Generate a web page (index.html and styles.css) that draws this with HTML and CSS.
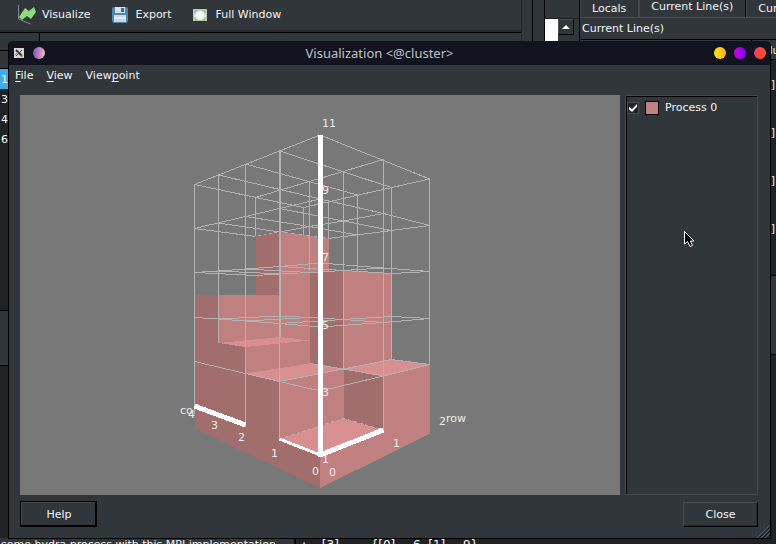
FILE: index.html
```html
<!DOCTYPE html>
<html lang="en">
<head>
<meta charset="utf-8">
<title>Visualization</title>
<link rel="stylesheet" href="styles.css">
</head>
<body>
<main class="desktop">
  <section class="left">
    <div class="toolbar">
      <button class="tool"><svg width="19" height="20" viewBox="0 0 19 20"><path d="M.5 0v14l12 5" fill="none" stroke="#8a8d8e"/><path d="M1 12 7 3l4 3 5-4 2 5-5 7-4-3-5 4z" fill="#8edb7d"/></svg>Visualize</button>
      <button class="tool"><svg width="16" height="16" viewBox="0 0 16 16"><rect width="16" height="16" rx="2" fill="#4d87aa"/><rect x="3" width="10" height="6" fill="#d8e2e8"/><rect x="9" y="1" width="3" height="4" fill="#356c92"/><rect x="2" y="8" width="12" height="7" fill="#c8d8e2"/><path d="M2 11h12" stroke="#e9eff3" stroke-width="2"/></svg>Export</button>
      <button class="tool"><svg width="14" height="12" viewBox="0 0 14 12"><rect width="14" height="12" fill="#bfcac0"/><rect x="1" y="2" width="12" height="9" fill="#dce7dc"/><circle cx="7" cy="6" r="4" fill="#f8faf8"/><path d="M2 5V2h3M9 2h3v3M2 8v3h3M9 11h3V8" fill="none" stroke="#86b768"/></svg>Full Window</button>
    </div>
    <div class="work">
      <ul class="ranks">
        <li class="tabstub"></li><li class="headstub"></li>
        <li class="on">1</li><li>3</li><li>4</li><li>6</li><li class="void"></li><li class="split"></li><li class="void grow"></li>
      </ul>
    </div>
    <p class="log">some hydra process with this MPI implementation</p>
  </section>
  <div class="gutter"></div>
  <section class="source">
    <div class="sourcehead"></div>
    <div class="scroll"><span class="page"></span><button class="up" aria-label="Scroll up"></button></div>
  </section>
  <section class="right">
    <nav class="tabs"><button>Locals</button><button class="active">Current Line(s)</button><button>Current Stack</button></nav>
    <h2>Current Line(s)</h2>
    <div class="vars">
      <div class="varhead"><span></span><span>Value</span></div>
      <div class="row">]</div><div class="row">]</div><div class="row">]</div><div class="row">]</div>
      <div class="rest"></div><div class="band"></div><div class="rest grow"></div>
    </div>
  </section>
  <p class="value">: &nbsp;-.[3] <span>{[0] = 6, [1] = 9}</span></p>
</main>

<section class="dialog" role="dialog" aria-label="Visualization">
  <header class="title">
    <svg width="10" height="10" viewBox="0 0 10 10"><rect width="10" height="10" fill="#d6d6d2"/><path d="m2 2 6 6" stroke="#333" stroke-width="2"/><path d="M8 2 2 8" stroke="#444"/><path d="m1 7 3-3M6 8h3" stroke="#e08040"/></svg>
    <i class="dot pin"></i>
    <h1>Visualization &lt;@cluster&gt;</h1>
    <button class="dot min" aria-label="Minimize"></button><button class="dot max" aria-label="Maximize"></button><button class="dot end" aria-label="Close window"></button>
  </header>
  <nav class="menu"><button><u>F</u>ile</button><button><u>V</u>iew</button><button>View<u>p</u>oint</button></nav>
  <div class="body">
    <div class="plot">
      <svg viewBox="20 95 600 400" role="img" aria-label="3D bar chart">
        <g class="grid">
          <path d="M320 135 194.500 184.500M383.500 159.500 255.500 197.500M429.500 179 303.500 207.500M320 135 429.500 179M279.500 151 391.500 187.500M245.500 164 357.500 195M218.500 175 328.500 201M194.500 184.500 303.500 207.500"/>
          <path d="M320 199 279.500 208.500 245.500 216.500 194.500 228.500M383.500 213.500 343.500 221 309.500 226.500 255.500 236.500M429.500 225.500 391.500 230.500 328.500 238.500M320 199 383.500 213.500 429.500 225.500M279.500 208.500 343.500 221 391.500 230.500M245.500 216.500 309.500 226.500 357.500 235M218.500 223 280 232 328.500 238.500M194.500 228.500 255.500 236.500"/>
          <path d="M303.500 207V236M357.500 195V271M328.500 201V239M255.500 197V237"/>
        </g>
        <g class="side">
          <path d="M255.500 236.500 280 232V300H255.500zM309.500 272 343.500 270.500V370L309.500 364zM194.500 295H218.500V343L245.500 347V373.500L279.500 381.500V439L320 455V488L194.500 428zM343.500 369 383.500 376V431L343.500 418.500z"/>
        </g>
        <g class="face">
          <path d="M280 232 328.500 238.500V271.500L309.500 272V364L280 340zM218.500 295H280V337L309.500 340.500V364L245.500 373.500V347L218.500 343zM343.500 270.500 391.500 273.500V360L343.500 369zM279.500 381.500 320 373.500 343.500 369V418.500L279.500 439zM383.500 376 429.500 364.500V434L320 488V455L383.500 431z"/>
        </g>
        <g class="top">
          <path d="M218.500 343 280 337 309.500 340.500 245.500 347zM245.500 373.500 309.500 363.500 343.500 369 279.500 381.500zM343.500 369 391.500 359.500 429.500 364.500 383.500 376zM320 455 279.500 439 343.500 418.500 383.500 430z"/>
        </g>
        <g class="grid">
          <path d="M194.500 184V414M218.500 175V343M245.500 164V427M383.500 159V431M343.500 171V369M309.500 181V271M391.500 187V360M429.500 179V365M279.500 381V439"/>
          <path class="double" d="M280 151V337"/><path d="M279.500 337V382"/>
          <path d="M320 263 279.500 266.500 245.500 269 218.500 271 194.500 272.500 255.500 275.500M383.500 268 343.500 270.500 309.500 272.500 280 274 255.500 275.500M320 263 383.500 268 429.500 271.500 391.500 273.500M279.500 266.500 343.500 270.500 391.500 273.500M245.500 269 309.500 272.500M218.500 271 280 274"/>
          <path d="M320 327 279.500 323.500 245.500 321 218.500 319 194.500 317.500M383.500 322.500 343.500 319.500 309.500 317.500 280 316 218.500 319M320 327 383.500 322.500 429.500 318.500 391.500 316.500 343.500 319.500 279.500 323.500M245.500 321 309.500 317.500"/>
          <path d="M194.500 361.500 245.500 373.500 279.500 381.500 320 391 383.500 376 429.500 364.500 391.500 359.500 343.500 369 383.500 376M343.500 369 279.500 381.500M309.500 363.500 343.500 369"/>
          <path d="M279.500 439 343.500 418.500 383.500 430" stroke-dasharray="3 3"/>
        </g>
        <g class="labels">
          <text x="180" y="414">co</text><text x="188" y="418">4</text><text x="211" y="429">3</text><text x="238" y="441">2</text><text x="271" y="457">1</text>
          <text x="312" y="475">0</text><text x="329" y="476">0</text><text x="393" y="447">1</text><text x="439" y="425">2</text><text x="446" y="422">row</text>
          <text x="322" y="127">11</text><text x="322" y="194">9</text><text x="322" y="261">7</text><text x="322" y="329">5</text><text x="322" y="396">3</text><text x="322" y="463">1</text>
        </g>
        <g class="axis"><path d="M320.500 135V457"/><path d="M194.500 406 245.500 425"/><path class="fine" d="M279.500 439 320 455"/><path d="M320 455 383.500 430"/></g>
      </svg>
    </div>
    <aside class="legend"><label><input type="checkbox" checked><i></i>Process 0</label></aside>
  </div>
  <footer class="foot"><button class="default">Help</button><button>Close</button></footer>
  <svg class="grip" width="13" height="13" viewBox="0 0 13 13"><path d="M0 13 13 0M4 13l9-9M8 13l5-5" stroke="#565f66"/><path d="m2 13 11-11M6 13l7-7M10 13l3-3" stroke="#171b1e"/></svg>
</section>
<svg class="pointer" width="11" height="17" viewBox="0 0 11 17"><path d="M.5.500V13l3-2.500L6 15.500l2.500-1L6.500 10H10z" fill="#000" stroke="#fff"/></svg>
</body>
</html>
```
FILE: styles.css
```css
* { box-sizing: border-box; }
body {
  margin: 0;
  height: 100vh;
  overflow: hidden;
  position: relative;
  background: #31363a;
  color: #f2f4f5;
  font: 11px/14px "DejaVu Sans", sans-serif;
}
button { font: inherit; color: inherit; background: none; border: 0; padding: 0; }
ul, p, h1, h2 { margin: 0; padding: 0; font: inherit; list-style: none; }

/* Main window */
.desktop { height: 100vh; display: flex; position: relative; overflow: hidden; }
.left { flex: 1; display: flex; flex-direction: column; min-width: 0; border-right: 1px solid #25292c; }
.toolbar { height: 33px; flex: none; display: flex; align-items: flex-start; gap: 22px; padding: 4px 18px; border-bottom: 1px solid #000; box-shadow: inset 0 -2px #262a2d; }
.tool { display: flex; align-items: center; gap: 5px; height: 22px; }
.tool + .tool { gap: 7px; }
.tool:last-child { gap: 8px; }
.work { flex: 1; min-height: 0; }
.ranks { height: 100%; width: 40px; display: flex; flex-direction: column; border-right: 1px solid #000; }
.ranks li { height: 20px; flex: none; padding: 4px 1px; background: #1f2326; }
.ranks .tabstub { height: 18px; background: #31363a; border-bottom: 1px solid #000; }
.ranks .headstub { height: 18px; background: #31363a; border-bottom: 1px solid #000; }
.ranks .on { background: #3daee9; }
.ranks .void { height: 161px; }
.ranks .split { height: 56px; background: #31363a; border: solid #000; border-width: 1px 0; }
.ranks .grow { height: auto; flex: 1; }
.log { height: 14px; flex: none; margin-bottom: -8px; padding-left: 1px; white-space: nowrap; }
.gutter { width: 11px; border-right: 1px solid #000; }
.source { width: 47px; border-right: 1px solid #000; padding-left: 11px; }
.sourcehead { height: 19px; border-left: 1px solid #000; border-bottom: 1px solid #1c1f21; }
.scroll { display: flex; border-left: 1px solid #000; height: 60px; }
.page { width: 13px; background: #fff; }
.up { width: 16px; height: 16px; border: 1px solid #464d53; border-right-color: #000; border-bottom-color: #000; display: grid; place-items: center; }
.up::after { content: ""; border: 4px solid transparent; border-top: 0; border-bottom-color: #fff; }
.right { width: 196px; display: flex; flex-direction: column; overflow: hidden; }
.tabs { display: flex; height: 18px; border-bottom: 1px solid #464d53; flex: none; white-space: nowrap; }
.tabs button { padding: 1px 12px 0 11px; border-right: 1px solid #41484e; border-left: 1px solid #41484e; }
.tabs .active { border-right: 1px solid #000; padding: 0 12px 3px 11px; }
.right h2 { height: 21px; padding: 4px 2px; flex: none; }
.vars { flex: 1; margin-left: 1px; border-top: 1px solid #000; display: flex; flex-direction: column; background: #1f2326; }
.varhead { display: flex; height: 20px; background: #31363a; border-bottom: 1px solid #000; flex: none; }
.varhead span { padding: 4px; }
.varhead span:first-child { width: 171px; flex: none; border-right: 1px solid #000; }
.row { height: 48px; flex: none; padding: 18px 1px; text-align: right; }
.rest { height: 23px; }
.band { height: 80px; background: #31363a; border: solid #000; border-width: 1px 0; }
.grow { flex: 1; }
.value { position: absolute; left: 294px; right: 0; bottom: -8px; height: 14px; padding-left: 6px; background: #1f2326; border-left: 2px solid #000; font-size: 12px; }
.value span { margin-left: 28px; }

/* Dialog */
.dialog {
  position: absolute;
  inset: 41px 5px 5px 8px;
  display: flex;
  flex-direction: column;
  background: #31363a;
  border: solid #000;
  border-width: 0 1px 1px;
  border-radius: 5px 5px 0 0;
}
.title { height: 24px; flex: none; display: flex; align-items: center; gap: 8px; padding: 0 4px 0 5px; background: #11131f; border-radius: 5px 5px 0 0; }
.title svg { margin-right: 1px; }
.title h1 { flex: 1; text-align: center; color: #c0c2c9; font: 13px/20px "Noto Sans", sans-serif; }
.dot { width: 12px; height: 12px; border-radius: 50%; flex: none; }
.pin { background: linear-gradient(90deg, #7b55c0, #f5b5c8); }
.min { background: linear-gradient(90deg, #f8e800, #ffae30); }
.max { background: linear-gradient(90deg, #cf00dc, #7a00ff); }
.end { background: linear-gradient(90deg, #ff3564, #ff5520); }
.menu { height: 30px; flex: none; display: flex; align-items: flex-start; gap: 13px; padding: 4px 6px; }
.menu u { text-underline-offset: 2px; }
.body { flex: 1; min-height: 0; display: flex; gap: 5px; padding: 0 12px 0 11px; }
.plot { flex: 1; background: #787878; min-width: 0; }
.plot svg { display: block; width: 100%; height: 100%; }
.grid path { fill: none; stroke: #b2b2b2; shape-rendering: crispEdges; }
.grid .double { stroke-width: 2; }
.side { fill: #a26d6d; }
.face { fill: #c08080; }
.top { fill: #d78f8f; }
.side, .face, .top { shape-rendering: crispEdges; }
.axis { fill: none; stroke: #fff; stroke-width: 5; shape-rendering: crispEdges; }
.axis .fine { stroke-width: 3; }
.labels { fill: #ececec; }
.legend { width: 133px; border: 1px solid #424950; box-shadow: inset 1px 1px #000; padding: 5px 1px; }
.legend label { display: flex; align-items: center; gap: 6px; }
.legend input { appearance: none; margin: 0; width: 12px; height: 12px; background: #202428; border: 1px solid #454c52; display: grid; place-items: center; }
.legend input:checked::after { content: ""; width: 8px; height: 8px; background: #fff; clip-path: polygon(0 35%, 38% 65%, 100% 0, 100% 35%, 38% 100%, 0 70%); }
.legend i { width: 14px; height: 14px; background: #c08080; border: 1px solid #000; }
.foot { height: 43px; flex: none; display: flex; align-items: flex-start; justify-content: space-between; padding: 6px 12px 6px 11px; }
.foot button { width: 75px; height: 25px; margin-top: 1px; padding-top: 1px; border: 1px solid #454c52; border-right-color: #000; border-bottom-color: #000; box-shadow: inset -1px -1px #22272a; }
.foot .default { width: 77px; height: 26px; margin-top: 0; padding: 2px 0 0 2px; border: 1px solid #000; border-right-width: 2px; border-bottom-width: 2px; box-shadow: inset 1px 1px #454c52; }
.grip { position: absolute; right: 0; bottom: 0; }
.pointer { position: absolute; left: 684px; top: 231px; }
```
